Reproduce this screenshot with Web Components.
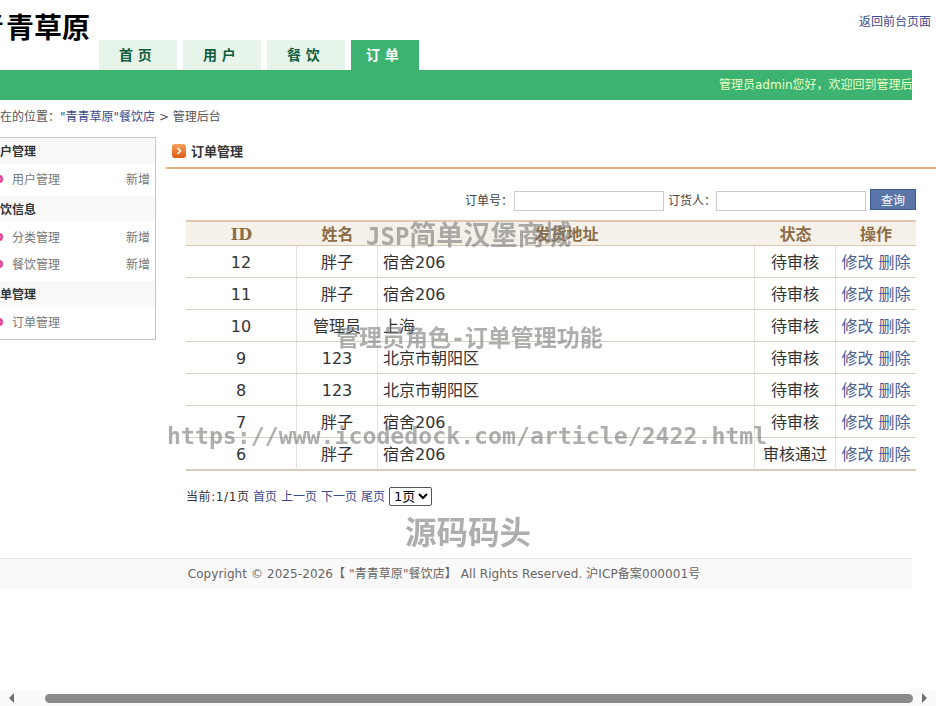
<!DOCTYPE html>
<html lang="zh">
<head>
<meta charset="utf-8">
<title>管理后台</title>
<style>
  html, body { margin: 0; padding: 0; height: 100%; overflow: hidden; background: #fff; }
  body { font: 12px/1.5 "DejaVu Sans", "Noto Sans CJK SC", sans-serif; color: #333; }
  /* Страница прокручена вправо на 24px, как на снимке */
  .page { width: 960px; margin-left: -24px; }
</style>
</head>
<body>
<div class="page">
  <site-header></site-header>
  <welcome-bar>管理员admin您好，欢迎回到管理后台</welcome-bar>
  <bread-crumb></bread-crumb>
  <admin-body>
    <side-menu slot="side">
      <menu-group title="用户管理">
        <menu-item add>用户管理</menu-item>
      </menu-group>
      <menu-group title="餐饮信息">
        <menu-item add>分类管理</menu-item>
        <menu-item add>餐饮管理</menu-item>
      </menu-group>
      <menu-group title="订单管理">
        <menu-item>订单管理</menu-item>
      </menu-group>
    </side-menu>
    <order-panel>订单管理</order-panel>
  </admin-body>
  <site-footer></site-footer>
</div>
<water-marks></water-marks>
<fake-scrollbar></fake-scrollbar>

<script>
// Шапка: логотип, вкладки и ссылка
class SiteHeader extends HTMLElement {
  constructor() {
    super();
    this.attachShadow({ mode: 'open' });
    const tabs = ['首 页', '用 户', '餐 饮', '订 单'];
    this.shadowRoot.innerHTML = `
      <style>
        :host { display: flex; height: 70px; align-items: flex-end; }
        .logo { width: 123px; align-self: flex-start; margin-top: 6px;
                font: bold 28px/40px "Noto Sans CJK SC", sans-serif; color: #000; white-space: nowrap; }
        .logo span { margin-right: 2px; }
        .tabs { display: flex; gap: 6px; }
        .tab { width: 58px; height: 30px; padding-left: 20px; background: #e6f4ea; color: #0e5c3c;
               font: bold 14px/30px "DejaVu Sans", "Noto Sans CJK SC", sans-serif; white-space: pre; }
        .tab.on { width: 53px; padding-left: 15px; background: #3cb371; color: #fff; }
        a { margin-left: auto; align-self: flex-start; margin-top: 13px; margin-right: 5px; color: #3b4a8c; text-decoration: none; }
      </style>
      <div class="logo"><span>青</span>青草原</div>
      <div class="tabs">
        ${tabs.map((t, i) => `<div class="tab ${i === 3 ? 'on' : ''}">${t}</div>`).join('')}
      </div>
      <a href="#">返回前台页面</a>
    `;
  }
}

// Зелёная полоса с приветствием, текст обрезается справа
class WelcomeBar extends HTMLElement {
  constructor() {
    super();
    this.attachShadow({ mode: 'open' });
    this.shadowRoot.innerHTML = `
      <style>
        :host { display: block; width: 936px; height: 30px; background: #3cb371; overflow: hidden; box-sizing: border-box;
                padding-left: 743px; color: #eaffc0; line-height: 30px; white-space: nowrap; }
      </style>
      <slot></slot>
    `;
  }
}

class BreadCrumb extends HTMLElement {
  constructor() {
    super();
    this.attachShadow({ mode: 'open' });
    this.shadowRoot.innerHTML = `
      <style>
        :host { display: block; height: 32px; line-height: 34px; color: #555; }
        div { white-space: nowrap; }
        a { color: #3b4a8c; text-decoration: none; }
      </style>
      <div>您现在的位置：<a href="#">"青青草原"餐饮店</a> &gt; 管理后台</div>
    `;
  }
}

// Две колонки: меню и основная часть
class AdminBody extends HTMLElement {
  constructor() {
    super();
    this.attachShadow({ mode: 'open' });
    this.shadowRoot.innerHTML = `
      <style>
        :host { display: flex; padding-top: 5px; gap: 10px; }
      </style>
      <slot name="side"></slot>
      <slot></slot>
    `;
  }
}

class SideMenu extends HTMLElement {
  constructor() {
    super();
    this.attachShadow({ mode: 'open' });
    this.shadowRoot.innerHTML = `
      <style>
        :host { display: block; box-sizing: border-box; width: 180px; height: 203px; flex: none;
                border: 1px solid #c8c8c8; }
      </style>
      <slot></slot>
    `;
  }
}

class MenuGroup extends HTMLElement {
  constructor() {
    super();
    this.attachShadow({ mode: 'open' });
    this.shadowRoot.innerHTML = `
      <style>
        :host { display: block; }
        .head { height: 26px; line-height: 28px; padding-left: 11px; background: #f9f9f9; font-weight: bold; color: #333; }
        .list { padding-bottom: 5px; }
      </style>
      <div class="head">${this.getAttribute('title')}</div>
      <div class="list"><slot></slot></div>
    `;
  }
}

class MenuItem extends HTMLElement {
  constructor() {
    super();
    this.attachShadow({ mode: 'open' });
    this.shadowRoot.innerHTML = `
      <style>
        :host { display: flex; align-items: center; height: 23px; padding: 4px 5px 0 18px; color: #777; line-height: 24px; }
        svg { width: 8px; height: 8px; margin-right: 9px; margin-top: -2px; flex: none; }
        span { flex: 1; }
      </style>
      <svg viewBox="0 0 8 8"><circle cx="4" cy="4" r="4" fill="#ea3f98"/><path d="M3 2.2 5 4 3 5.8" fill="none" stroke="#fff" stroke-width="1.2"/></svg>
      <span><slot></slot></span>
      ${this.hasAttribute('add') ? '<b style="font-weight:normal">新增</b>' : ''}
    `;
  }
}

// Основная часть: заголовок, поиск, таблица заказов и постраничный блок
class OrderPanel extends HTMLElement {
  constructor() {
    super();
    this.attachShadow({ mode: 'open' });
    const rows = [
      [12, '胖子', '宿舍206', '待审核'],
      [11, '胖子', '宿舍206', '待审核'],
      [10, '管理员', '上海', '待审核'],
      [9, '123', '北京市朝阳区', '待审核'],
      [8, '123', '北京市朝阳区', '待审核'],
      [7, '胖子', '宿舍206', '待审核'],
      [6, '胖子', '宿舍206', '审核通过'],
    ];
    this.shadowRoot.innerHTML = `
      <style>
        :host { display: block; width: 770px; flex: none; }
        .title { display: flex; align-items: center; gap: 5px; height: 30px; padding-left: 6px; border-bottom: 2px solid #e3b27c;
                 font-weight: bold; font-size: 13px; color: #333; }
        .title svg { width: 14px; height: 14px; margin-top: -2px; }
        .content { padding: 20px 20px 0; }
        form { display: flex; justify-content: flex-end; align-items: flex-start; height: 22px; margin: 0 0 9px; color: #444; }
        label { line-height: 24px; width: 48px; white-space: nowrap; }
        label.first { width: 49px; }
        input { box-sizing: border-box; width: 150px; height: 20px; margin: 2px 4px 0 0; padding: 0 4px; border: 1px solid #ccc; background: #fff; }
        button { box-sizing: border-box; width: 46px; height: 21px; padding: 0; border: 1px solid #3d5a8f; background: #5a76a9; color: #fff;
                 font: 12px "Noto Sans CJK SC", sans-serif; }
        table { width: 730px; border-collapse: separate; border-spacing: 0; table-layout: fixed; font-size: 16px; color: #333; }
        th { height: 21px; padding: 2px 0 0; line-height: 21px; background: #f5f1e8; color: #8b6d47; font-size: 16px;
             font-family: "DejaVu Serif", "Noto Sans CJK SC", serif;
             border-top: 2px solid #dcc8b4; border-bottom: 1px solid #dcc8b4; }
        td { height: 29px; padding: 2px 0 0; line-height: 29px; text-align: center; border-bottom: 1px solid #dccfc0; border-right: 1px solid #e6e2dc; }
        td:last-child { border-right: 0; }
        td.addr { text-align: left; padding-left: 5px; }
        tr:last-child td { border-bottom-width: 2px; border-bottom-color: #d9cbb9; }
        td a { color: #4a6098; text-decoration: none; }
        .pager { display: flex; align-items: center; height: 19px; margin-top: 16px; gap: 4px; color: #333; white-space: nowrap; }
        .pager span { width: 63px; letter-spacing: .6px; }
        .pager a { color: #3b4a8c; text-decoration: none; }
        select { width: 43px; height: 19px; padding: 0; font: 13px "DejaVu Sans", "Noto Sans CJK SC", sans-serif; background: #fff; border: 1px solid #555; border-radius: 2px; }
      </style>
      <div class="title">
        <svg viewBox="0 0 14 14">
          <defs><linearGradient id="g" x1="0" y1="0" x2="0" y2="1"><stop offset="0" stop-color="#f4a15a"/><stop offset="1" stop-color="#dd5a12"/></linearGradient></defs>
          <rect width="14" height="14" rx="3" fill="url(#g)"/>
          <path d="M5.5 4 8.5 7 5.5 10" fill="none" stroke="#fff" stroke-width="1.6"/>
        </svg>
        <span><slot></slot></span>
      </div>
      <div class="content">
        <form onsubmit="return false">
          <label class="first">订单号：</label><input type="text">
          <label>订货人：</label><input type="text">
          <button type="button">查询</button>
        </form>
        <table>
          <colgroup><col style="width:111px"><col style="width:81px"><col style="width:377px"><col style="width:81px"><col style="width:80px"></colgroup>
          <thead><tr><th>ID</th><th>姓名</th><th>发货地址</th><th>状态</th><th>操作</th></tr></thead>
          <tbody>
            ${rows.map(r => `
              <tr><td>${r[0]}</td><td>${r[1]}</td><td class="addr">${r[2]}</td><td>${r[3]}</td>
              <td><a href="#">修改</a> <a href="#">删除</a></td></tr>`).join('')}
          </tbody>
        </table>
        <div class="pager">
          <span>当前:1/1页</span><a href="#">首页</a><a href="#">上一页</a><a href="#">下一页</a><a href="#">尾页</a>
          <select><option>1页</option></select>
        </div>
      </div>
    `;
  }
}

class SiteFooter extends HTMLElement {
  constructor() {
    super();
    this.attachShadow({ mode: 'open' });
    this.shadowRoot.innerHTML = `
      <style>
        :host { display: block; box-sizing: border-box; width: 936px; height: 31px; margin-top: 52px; border-top: 1px solid #e5e5e5;
                background: #f9f9f9; color: #666; line-height: 30px; text-align: center; }
        div { white-space: nowrap; letter-spacing: .08px; }
      </style>
      <div>Copyright © 2025-2026【 "青青草原"餐饮店】 All Rights Reserved. 沪ICP备案000001号</div>
    `;
  }
}

// Водяные знаки лежат поверх всей страницы
class WaterMarks extends HTMLElement {
  constructor() {
    super();
    this.attachShadow({ mode: 'open' });
    this.shadowRoot.innerHTML = `
      <style>
        :host { position: fixed; inset: 0; pointer-events: none; }
        div { position: absolute; white-space: nowrap; color: rgba(125,125,125,.62); font-weight: bold;
              font-family: "DejaVu Sans Mono", "Noto Sans CJK SC", monospace; line-height: 1; }
        .w1 { left: 366px; top: 222px; font-size: 27px; }
        .w1 span { font-size: 24px; }
        .w2 { left: 336px; top: 327px; font-size: 23px; }
        .w3 { left: 167px; top: 424px; font-size: 23.2px; }
        .w4 { left: 405px; top: 518px; font-size: 31.5px; }
      </style>
      <div class="w1"><span>JSP</span>简单汉堡商城</div>
      <div class="w2">管理员角色-订单管理功能</div>
      <div class="w3">https://www.icodedock.com/article/2422.html</div>
      <div class="w4">源码码头</div>
    `;
  }
}

// Нарисованная горизонтальная полоса прокрутки
class FakeScrollbar extends HTMLElement {
  constructor() {
    super();
    this.attachShadow({ mode: 'open' });
    this.shadowRoot.innerHTML = `
      <style>
        :host { position: fixed; left: 0; right: 0; bottom: 0; height: 16px; background: #f9f9f9;
                display: flex; align-items: center; padding: 0 9px; box-sizing: border-box; }
        i { width: 0; height: 0; border: 5px solid transparent; border-left-width: 0; border-right: 5px solid #6e6e6e; flex: none; }
        i.r { border-right-width: 0; border-left: 5px solid #6e6e6e; }
        b { flex: 1; height: 9px; margin: 0 9px 0 31px; border-radius: 5px; background: #8a8a8a; }
      </style>
      <i></i><b></b><i class="r"></i>
    `;
  }
}

customElements.define('site-header', SiteHeader);
customElements.define('welcome-bar', WelcomeBar);
customElements.define('bread-crumb', BreadCrumb);
customElements.define('admin-body', AdminBody);
customElements.define('side-menu', SideMenu);
customElements.define('menu-group', MenuGroup);
customElements.define('menu-item', MenuItem);
customElements.define('order-panel', OrderPanel);
customElements.define('site-footer', SiteFooter);
customElements.define('water-marks', WaterMarks);
customElements.define('fake-scrollbar', FakeScrollbar);
</script>
</body>
</html>
